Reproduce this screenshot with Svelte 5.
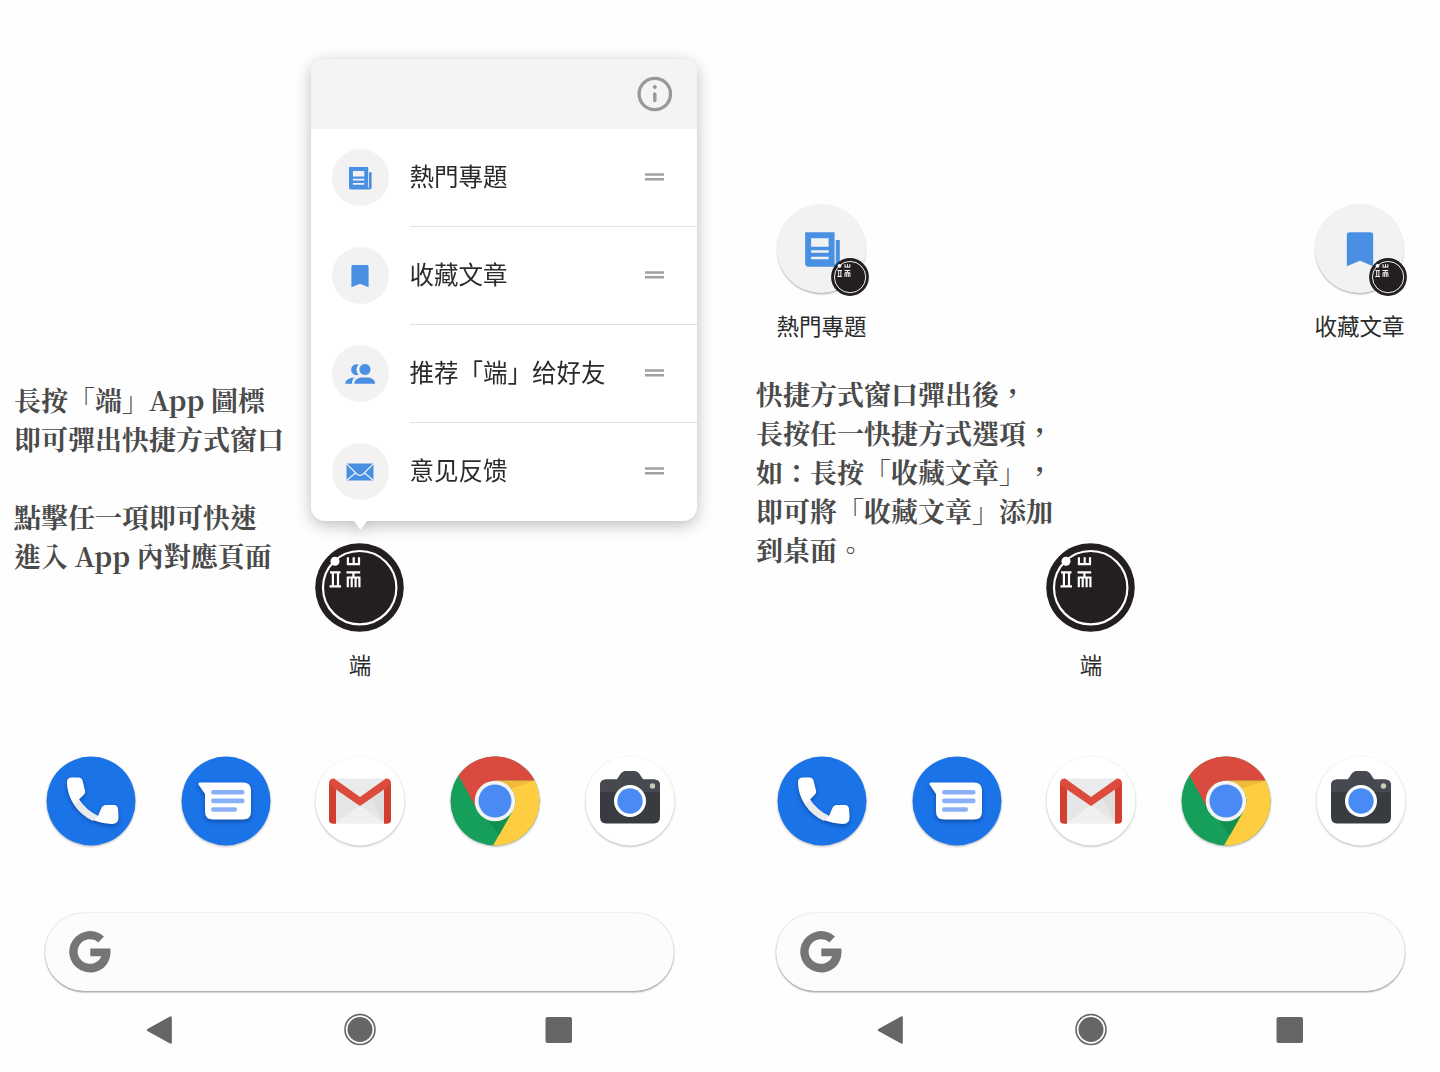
<script>
  const menu = [
    { icon: 'news', label: '熱門專題' },
    { icon: 'bookmark', label: '收藏文章' },
    { icon: 'people', label: '推荐「端」给好友' },
    { icon: 'mail', label: '意见反馈' },
  ];
  const shortcuts = menu.slice(0, 2);
  const dock = ['phone', 'messages', 'gmail', 'chrome', 'camera'];
</script>

{#snippet glyph(name)}
  <svg class="glyph" viewBox="0 0 30 30">
    {#if name === 'news'}
      <path fill-rule="evenodd" d="M4 4H23.200v20.500a.5.5 0 0 0 .8 0V9.200H26.600v15.300a2 2 0 0 1-2 2H5.800a1.800 1.800 0 0 1-1.800-1.800ZM7.900 8v5.500h11.400V8ZM7.900 15.800v1.700h11.400V15.800ZM7.900 20v1.700h11.400V20Z" />
    {:else if name === 'bookmark'}
      <path d="M8.200 4h13.600a1.800 1.800 0 0 1 1.800 1.800v20.400L15 22.700l-8.600 3.500V5.800A1.800 1.800 0 0 1 8.200 4Z" />
    {:else if name === 'people'}
      <path d="M20 4.900a5.600 5.600 0 1 1-.1 0ZM13.600 5.600a7.300 7.300 0 0 0 0 10.200A5.500 5.500 0 1 1 13.600 5.600ZM9.300 24.800c0-4.600 4.600-6.400 7.800-6.400h5.600c3.600 0 7.600 2.200 7.600 6.400ZM.2 24.800c0-3.600 3.600-6.200 9.400-6.400-1.900 1.700-2.600 3.600-2.600 6.400Z" />
    {:else}
      <path d="M1.500 6.500h27v17h-27Z" />
      <path class="fold" d="M1.500 6.700 12 17.200q3 2.500 6 0L28.500 6.700M1.500 23.500l9.300-7.700M28.500 23.500l-9.300-7.700" />
    {/if}
  </svg>
{/snippet}

{#snippet logo()}
  <svg class="logo" viewBox="0 0 89 89">
    <circle cx="44.500" cy="44.500" r="44.300" fill="#231f20" />
    <g fill="none" stroke="#fff" stroke-width="2.200">
      <circle cx="44.700" cy="44.700" r="36.700" />
      <path d="M32.900 14.300v7.300M38.700 14.300v7.300M44 14.300v7.300M31.900 21.200h13.200M15 29.300h10.500M17.900 29.300v14.500M23 29.300v14.500M14.500 43.400h11.500M31.500 29.300h13.700M38.400 29.300v4.500M32.800 44.300v-9.800h11.600v9.800M36.700 35v9.300M40.600 35v9.300" />
    </g>
    <circle cx="20" cy="18.300" r="4.500" fill="#fff" />
  </svg>
{/snippet}

{#snippet dockIcon(name)}
  <svg class="dock-icon" viewBox="0 0 90 90">
    {#if name === 'phone'}
      <circle cx="45" cy="45" r="44.500" fill="#1b73e8" />
      <path class="lift" d="M21 26q0-4.500 5-4.500h6.500q3 0 4 3l2.500 10q.8 2.500-1.500 4.500l-4.500 4.500q6 10.500 19 16.500l3-7q1.500-4 5-4h8q3.500 0 4 4l.5 7q.5 8-6.500 8C38 67 21 47 21 26Z" fill="#fff" />
      <path d="m33 43.500-5 5q7 11 19 16.500l5-5q-12-6-19-16.500Z" fill="#e8eaed" />
    {:else if name === 'messages'}
      <circle cx="45" cy="45" r="44.500" fill="#1b73e8" />
      <path class="lift" d="M19 26.500h43q8 0 8 8v21.500q0 7.500-8 7.500H32q-8 0-8-8V38l-6.500-9.500q-.5-2 1.500-2Z" fill="#fff" />
      <path d="M32.300 36.300h29M32.300 44.900h29M32.300 53.500h21.500" stroke="#8ab0f8" stroke-width="4.600" stroke-linecap="round" />
    {:else if name === 'gmail'}
      <circle cx="45" cy="45" r="44.500" fill="#fff" />
      <path d="M17 22.500h56v45H17Z" fill="#ebebeb" />
      <path d="m21 33 24 17L17 67ZM45 50l28 17V31Z" fill="#dedede" />
      <path d="M21 33l24 17 11-8 13 25H21Z" fill="#e6e6e6" />
      <path d="M21 67 45 49l24 18Z" fill="#f0f0f0" />
      <path d="M14 27.500q0-5 5-5l26 18.500L71 22.500q5 0 5 5v36q0 4-4 4h-3V33.500L45 50 21 33.500v34h-3q-4 0-4-4Z" fill="#dc4b3e" />
      <path d="M14 28v35.500q0 4 4 4h3V33.500ZM76 28v35.500q0 4-4 4h-3V33.500Z" fill="#d23f31" />
    {:else if name === 'chrome'}
      <circle cx="45" cy="45" r="44.500" fill="#169f5b" />
      <path d="M8.600 19.500A44.500 44.500 0 0 1 84.700 24.800H45a20 20 0 0 0-18 28.500Z" fill="#db4a3f" />
      <path d="M84.700 24.800A44.500 44.500 0 0 1 43 89.400L62.500 55A20 20 0 0 0 45 24.800Z" fill="#ffcd41" />
      <path d="M45 24.800h39.700L62 32Z" fill="#f0b93a" />
      <path d="m36 62 9 3 17.500-10L49 79Z" fill="#13904f" />
      <circle cx="45" cy="45" r="20.300" fill="#f4f4f4" />
      <circle cx="45" cy="45" r="16.500" fill="#4a8af4" />
    {:else}
      <circle cx="45" cy="45" r="44.500" fill="#fff" />
      <path d="M21 23.500h11l4-6q2-2.500 5-2.500h8q3 0 5 2.500l4 6h11q6 0 6 6v31q0 7-6 7H21q-6 0-6-7v-31q0-6 6-6Z" fill="#383c41" />
      <path d="M15 36v-6.500q0-6 6-6h11l4-6q2-2.500 5-2.500h8q3 0 5 2.500l4 6h11q6 0 6 6V36Z" fill="#464a50" />
      <circle cx="67.500" cy="30" r="2.700" fill="#c9cbbd" />
      <circle cx="45" cy="45" r="16" fill="#fff" />
      <circle cx="45" cy="45" r="12.700" fill="#4a8af4" />
    {/if}
  </svg>
{/snippet}

{#snippet home()}
  <div class="app">
    {@render logo()}
    <span class="app-label">端</span>
  </div>
  <div class="dock">
    {#each dock as name}
      {@render dockIcon(name)}
    {/each}
  </div>
  <div class="search">
    <svg class="google" viewBox="0 0 42 42">
      <path d="M35 5.600 29.300 11.500A12.300 12.300 0 1 0 32.300 25.200H21.300V17.500H41.300C43 32 33 41.500 21 41.500A20.700 20.700 0 1 1 35 5.600Z" fill="#757575" />
    </svg>
  </div>
  <div class="nav">
    <svg class="nav-icon" viewBox="0 0 34 34"><path d="M27.600 4.500v25L5 17Z" fill="#666" stroke="#666" stroke-width="2.500" stroke-linejoin="round" /></svg>
    <svg class="nav-icon" viewBox="0 0 34 34"><circle cx="17" cy="16.500" r="12.500" fill="#666" /><circle cx="17" cy="16.500" r="15" fill="none" stroke="#666" stroke-width="1.600" /></svg>
    <svg class="nav-icon" viewBox="0 0 34 34"><rect x="3.500" y="4" width="26.500" height="26" rx="2" fill="#666" /></svg>
  </div>
{/snippet}

<main class="stage" lang="zh-Hant">
  <section class="phone">
    <div class="upper with-menu">
      <div class="note">
        <p>長按「端」App 圖標</p>
        <p>即可彈出快捷方式窗口</p>
        <p class="spaced">點擊任一項即可快速</p>
        <p>進入 App 內對應頁面</p>
      </div>
      <div class="popup">
        <div class="popup-head">
          <svg class="info" viewBox="0 0 36 36">
            <circle cx="17.800" cy="18" r="15.700" fill="none" stroke="#999" stroke-width="3.300" />
            <circle cx="17.800" cy="11" r="2" fill="#999" />
            <path d="M17.800 18v6.500" stroke="#999" stroke-width="3.500" stroke-linecap="round" />
          </svg>
        </div>
        {#each menu as item}
          <div class="item">
            <span class="bubble">{@render glyph(item.icon)}</span>
            <div class="item-body">
              <span class="item-label">{item.label}</span>
              <svg class="handle" viewBox="0 0 19 8"><path d="M0 1.500h19M0 6.200h19" /></svg>
            </div>
          </div>
        {/each}
      </div>
    </div>
    {@render home()}
  </section>

  <section class="phone">
    <div class="upper">
      <div class="shortcuts">
        {#each shortcuts as item}
          <div class="shortcut">
            <span class="disc">
              {@render glyph(item.icon)}
              <span class="badge">{@render logo()}</span>
            </span>
            <span class="shortcut-label">{item.label}</span>
          </div>
        {/each}
      </div>
      <div class="note second">
        <p>快捷方式窗口彈出後，</p>
        <p>長按任一快捷方式選項，</p>
        <p>如：長按「收藏文章」，</p>
        <p>即可將「收藏文章」添加</p>
        <p>到桌面。</p>
      </div>
    </div>
    {@render home()}
  </section>
</main>

<style>
  :global(body) {
    margin: 0;
    background: #fff;
  }
  .stage {
    display: flex;
    gap: 11px;
    width: 1440px;
    height: 1072px;
    overflow: hidden;
    background: #fefefe;
    color: #2b2b2b;
    font-family: "Noto Sans CJK TC", sans-serif;
    text-spacing-trim: space-all;
  }
  svg {
    display: block;
    flex: none;
  }
  .phone {
    flex: none;
    width: 720px;
  }
  .upper {
    height: 543px;
  }
  .with-menu {
    display: flex;
  }
  .note {
    flex: none;
    width: 297px;
    padding: 380px 0 0 14px;
    color: #4a4a4a;
    font: 700 27px/39px "Noto Serif CJK TC", "Noto Serif TC", "Source Han Serif TC", "Noto Sans CJK TC", serif;
    white-space: nowrap;
  }
  .note p {
    margin: 0;
    height: 39px;
  }
  .note .spaced {
    margin-top: 39px;
  }
  .popup {
    position: relative;
    width: 386px;
    height: 462px;
    margin-top: 58.500px;
    border-radius: 14px;
    background: #fff;
    filter: drop-shadow(0 4px 8px rgba(0, 0, 0, 0.26));
  }
  .popup::after {
    content: "";
    position: absolute;
    left: 42px;
    top: 461px;
    width: 15px;
    height: 10px;
    background: #fff;
    clip-path: polygon(0 0, 100% 0, 58% 90%, 50% 100%, 42% 90%);
  }
  .popup-head {
    display: flex;
    align-items: center;
    justify-content: flex-end;
    height: 70px;
    padding-right: 24px;
    box-sizing: border-box;
    border-radius: 14px 14px 0 0;
    background: #f4f4f4;
  }
  .info {
    width: 36px;
    height: 36px;
  }
  .item {
    display: flex;
    align-items: center;
    height: 98px;
    padding-left: 20.500px;
  }
  .bubble {
    display: grid;
    place-items: center;
    width: 57px;
    height: 57px;
    margin-right: 21px;
    border-radius: 50%;
    background: #f2f2f2;
  }
  .glyph {
    width: 30px;
    height: 30px;
    fill: #4a90e2;
  }
  .fold {
    fill: none;
    stroke: #f2f2f2;
    stroke-width: 1.2;
  }
  .item-body {
    display: flex;
    flex: 1;
    align-items: center;
    justify-content: space-between;
    height: 98px;
    padding-right: 33px;
    box-sizing: border-box;
    border-bottom: 1px solid #e0e0e0;
  }
  .item:last-child .item-body {
    border-bottom-color: transparent;
  }
  .item-label {
    padding-bottom: 2px;
    font-size: 24.500px;
    line-height: 36px;
    white-space: nowrap;
  }
  .handle {
    width: 19px;
    height: 8px;
    stroke: #a0a0a0;
    stroke-width: 2.4;
  }
  .app {
    display: flex;
    flex-direction: column;
    align-items: center;
    height: 213px;
    width: 89px;
    margin-left: 315px;
  }
  .app .logo {
    width: 89px;
    height: 89px;
  }
  .app-label {
    margin: 16px 0 0 1px;
    font-size: 22.500px;
    line-height: 33px;
  }
  .dock {
    display: flex;
    justify-content: space-between;
    width: 628.500px;
    margin-left: 46px;
    height: 157px;
  }
  .dock-icon {
    width: 90px;
    height: 90px;
    overflow: visible;
    filter: drop-shadow(0 1px 1px rgba(0, 0, 0, 0.28));
  }
  .lift {
    filter: drop-shadow(0 2px 2px rgba(0, 30, 90, 0.45));
  }
  .search {
    display: flex;
    align-items: center;
    width: 629px;
    height: 78px;
    margin: 0 0 0 45px;
    padding-left: 23.500px;
    box-sizing: border-box;
    border-radius: 40px;
    background: #fcfcfc;
    box-shadow: 0 1.500px 1.500px rgba(0, 0, 0, 0.3), 0 0 1.500px rgba(0, 0, 0, 0.25);
  }
  .google {
    width: 42px;
    height: 42px;
  }
  .nav {
    display: flex;
    justify-content: space-between;
    width: 433px;
    margin: 22px 0 0 143px;
  }
  .nav-icon {
    width: 34px;
    height: 34px;
  }
  .shortcuts {
    display: flex;
    justify-content: space-between;
    width: 628px;
    height: 170px;
    padding: 204px 0 0 45.500px;
  }
  .shortcut {
    display: flex;
    flex-direction: column;
    align-items: center;
    width: 90px;
  }
  .disc {
    position: relative;
    display: grid;
    place-items: center;
    width: 89px;
    height: 89px;
    border-radius: 50%;
    background: #f2f2f2;
    box-shadow: 0 1.500px 1.500px rgba(0, 0, 0, 0.25);
  }
  .disc > .glyph {
    width: 46px;
    height: 46px;
  }
  .badge {
    position: absolute;
    left: 53.500px;
    top: 54px;
  }
  .badge .logo {
    width: 38px;
    height: 38px;
  }
  .shortcut-label {
    margin-top: 16px;
    font-size: 22.500px;
    line-height: 33px;
    white-space: nowrap;
  }
  .second {
    padding: 0 0 0 25px;
  }
</style>
